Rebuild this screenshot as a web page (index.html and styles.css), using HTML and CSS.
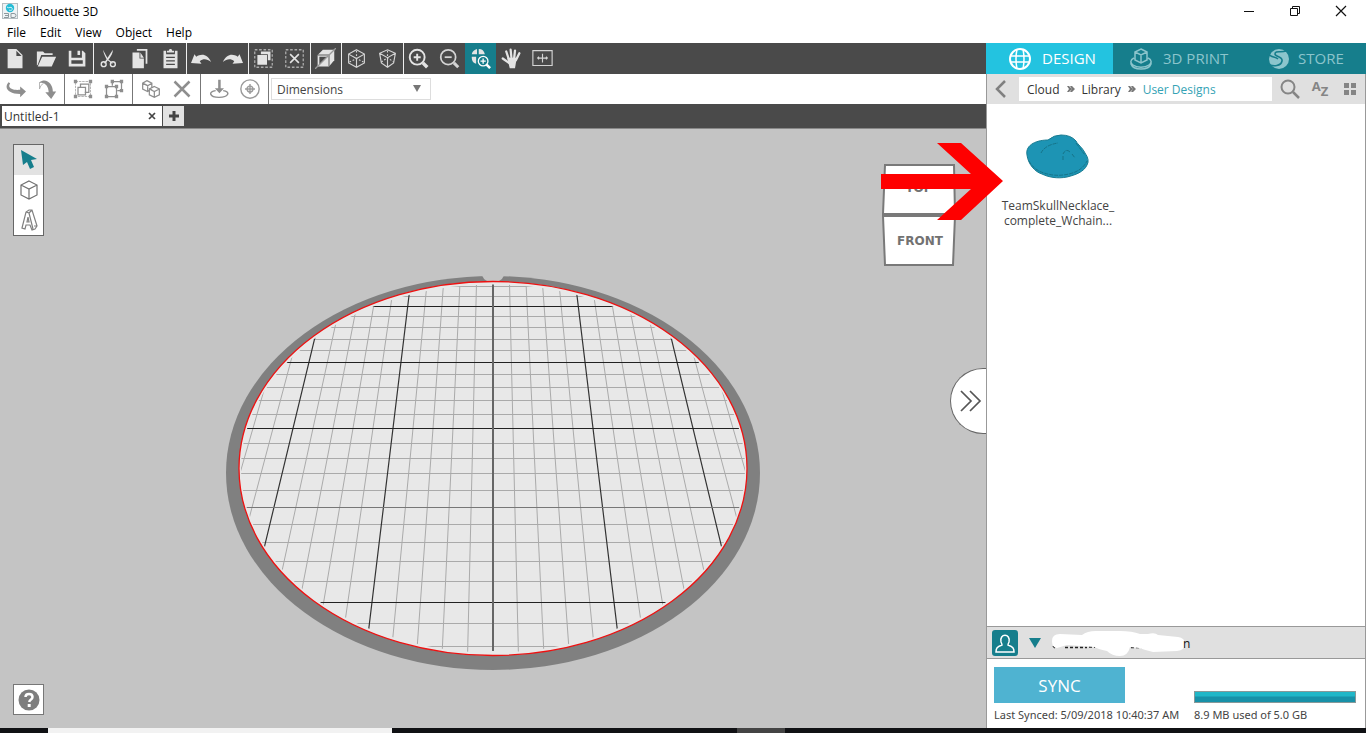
FILE: index.html
```html
<!DOCTYPE html>
<html lang="en">
<head>
<meta charset="utf-8">
<title>Silhouette 3D</title>
<link rel="stylesheet" href="styles.css">
</head>
<body>
<div class="window">
  <header class="titlebar">
    <svg class="app-icon" width="16" height="16" viewBox="0 0 16 16"><rect x=".5" y=".5" width="15" height="15" fill="#eef3f5" stroke="#b5bec2"/><circle cx="8" cy="5" r="4.200" fill="#25bcd6"/><path d="M5 4c2 2 4-1 5 1s-1 3-3 2" fill="none" stroke="#d5f3f8"/><path d="M2 10.500h4.500v4H2M3 12.500h3M9 10.500h3q2 0 2 2t-2 2H9z" fill="none" stroke="#8e999e"/></svg>
    <h1 class="app-name">Silhouette 3D</h1>
    <div class="window-controls">
      <button class="win-btn" aria-label="Minimize"><svg width="12" height="12"><path d="M1 6.500h10" stroke="#111"/></svg></button>
      <button class="win-btn" aria-label="Restore"><svg width="12" height="12" fill="none" stroke="#111"><path d="M1.500 3.500h7v7h-7zM3.500 3V1.500h7v7H9"/></svg></button>
      <button class="win-btn" aria-label="Close"><svg width="12" height="12"><path d="M1 1l10 10M11 1L1 11" stroke="#111" stroke-width="1.200"/></svg></button>
    </div>
  </header>
  <nav class="menubar">
    <button class="menu">File</button><button class="menu">Edit</button><button class="menu">View</button><button class="menu">Object</button><button class="menu">Help</button>
  </nav>

  <div class="main">
    <section class="editor">
      <div class="toolbar">
        <div class="group">
          <button class="tool" aria-label="New"><svg viewBox="0 0 24 24"><path fill-rule="evenodd" d="M3 1h10l7 7v15H3zM13 3v6h6z"/></svg></button>
          <button class="tool" aria-label="Open"><svg viewBox="0 0 24 24"><path d="M1 20V4h7l2 2h9v2H6L2 19M7 10h16l-5 11H2z"/></svg></button>
          <button class="tool" aria-label="Save"><svg viewBox="0 0 24 24"><path fill-rule="evenodd" d="M2 3h3v8h12V3h1l3 3v15H2zM5 14v4h13v-4zM12 3h3v5h-3z"/></svg></button>
        </div>
        <div class="group">
          <button class="tool" aria-label="Cut"><svg viewBox="0 0 24 24"><path d="M6 2c1 3 4 8 6 11l5 4-1 1-6-5C8 9 6 6 6 2zM17 2c0 4-2 7-4 10l-5 6-1-1 4-6z"/><g fill="none" stroke="#e4e4e4" stroke-width="1.600"><circle cx="6.500" cy="18.500" r="2.800"/><circle cx="17" cy="18.500" r="2.800"/></g></svg></button>
          <button class="tool" aria-label="Copy"><svg viewBox="0 0 24 24"><path d="M9 1h12v17h-2V3H9zM4 5h8v7h5v11H4zM13 5l4 6h-4z"/></svg></button>
          <button class="tool" aria-label="Paste"><svg viewBox="0 0 24 24"><path fill-rule="evenodd" d="M4 3h3v4h10V3h3v20H4zM7 10v1.500h10V10zm0 4v1.500h10V14zm0 4v1.500h10V18zM8 5V3h2l1-2h2l1 2h2v2z"/></svg></button>
        </div>
        <div class="group">
          <button class="tool" aria-label="Undo"><svg viewBox="0 0 24 24"><path d="M0 17L4 7l2 3c6-4 13-3 17 6-5-4-9-4-13-1l2 3z"/></svg></button>
          <button class="tool" aria-label="Redo"><svg viewBox="0 0 24 24"><path d="M24 17L20 7l-2 3C12 6 5 7 1 16c5-4 9-4 13-1l-2 3z"/></svg></button>
        </div>
        <div class="group">
          <button class="tool" aria-label="Select all"><svg viewBox="0 0 24 24"><path d="M2 2h20v20H2z" fill="none" stroke="#aaa" stroke-width="1.500" stroke-dasharray="3 2"/><path d="M9 4h11v10h-3V7H9zM5 8h11v11H5z"/></svg></button>
          <button class="tool" aria-label="Deselect all"><svg viewBox="0 0 24 24" fill="none" stroke="#aaa"><path d="M2 2h20v20H2z" stroke-width="1.500" stroke-dasharray="3 2"/><path d="M7 7l10 10M17 7L7 17" stroke="#e4e4e4" stroke-width="1.800"/></svg></button>
        </div>
        <div class="group">
          <button class="tool" aria-label="Mirror"><svg viewBox="0 0 24 24"><path d="M3 8l6-6h13v12l-6 7H3z"/><path d="M3 8h13l6-6M16 8v13" fill="none" stroke="#4a4a4a"/><path d="M5 10h9L5 19z" fill="#4a4a4a"/><path d="M0 24L24 0" stroke="#999" stroke-width="1.500"/></svg></button>
        </div>
        <div class="group">
          <button class="tool" aria-label="Perspective view"><svg viewBox="0 0 24 24" fill="none" stroke="#d4d4d4" stroke-width="1.300"><path d="M12 2l9 5v10l-9 5-9-5V7zM3 7l9 5 9-5M12 12v10"/><path d="M12 3v9M4 16l8-4 8 4" stroke-dasharray="2 2"/></svg></button>
          <button class="tool" aria-label="Orthographic view"><svg viewBox="0 0 24 24" fill="none" stroke="#d4d4d4" stroke-width="1.300"><path d="M12 2l9 4-2 11-7 5-7-5L3 6zM3 6l9 5 9-5M12 11v11"/><path d="M12 3v8M5 16l7-5 7 5" stroke-dasharray="2 2"/></svg></button>
        </div>
        <div class="group">
          <button class="tool" aria-label="Zoom in"><svg viewBox="0 0 24 24" fill="none" stroke="#e4e4e4" stroke-width="2.200"><circle cx="10.500" cy="10.500" r="8.500"/><path d="M6.500 10.500h8M10.500 6.500v8"/><path d="M17 17l5 5" stroke-width="4"/></svg></button>
          <button class="tool" aria-label="Zoom out"><svg viewBox="0 0 24 24" fill="none" stroke="#d4d4d4" stroke-width="2"><circle cx="10.500" cy="10.500" r="8.500"/><path d="M6.500 10.500h8"/><path d="M17 17l5 5" stroke-width="3.500"/></svg></button>
          <button class="tool active" aria-label="Fit to plate"><svg viewBox="0 0 24 24"><path d="M2 7c1-4 3-5 6-6v6zM10 1c4 0 6 2 7 6h-7zM2 10h5v8c-4-1-5-4-5-8z"/><g fill="none" stroke="#fff" stroke-width="1.500"><circle cx="15" cy="15" r="5.500"/><path d="M12 15h6M15 12v6"/><path d="M19 19l4 4" stroke-width="3"/></g></svg></button>
          <button class="tool" aria-label="Pan"><svg viewBox="0 0 24 24" fill="none" stroke="#e4e4e4" stroke-width="2.600" stroke-linecap="round"><path d="M9 13L6 4M12 12L11 2M15 12l1-9M17 14l4-8M9 17l-7-5"/><path d="M7 11h11l-2 12H10z" fill="#e4e4e4" stroke="none"/></svg></button>
          <button class="tool" aria-label="Fit window"><svg viewBox="0 0 24 24" fill="none" stroke="#d4d4d4" stroke-width="1.300"><path d="M1 3h22v17H1zM7 11.500h10M12 6.500v10M8 10l-1.500 1.500L8 13M16 10l1.500 1.500L16 13"/></svg></button>
        </div>
      </div>

      <div class="toolbar light">
        <div class="group">
          <button class="tool" aria-label="Rotate horizontally"><svg viewBox="0 0 24 24"><path d="M3 4c-6 7 0 14 14 14v4l7-7-7-6v4C8 14 1 11 5 5z"/></svg></button>
          <button class="tool" aria-label="Rotate vertically"><svg viewBox="0 0 24 24"><path d="M3 4c8-6 16 2 16 11h4l-6 9-7-8h4C14 9 9 3 3 5z"/><path d="M3 4v8q1-5 5-7" fill="none" stroke="#aaa"/></svg></button>
        </div>
        <div class="group">
          <button class="tool" aria-label="Group"><svg viewBox="0 0 24 24"><path d="M3 3h18v18H3z" fill="none" stroke="#a8a8a8" stroke-dasharray="3 1"/><path d="M9 10V6h10v10h-5M6 10h9v9H6z" fill="none" stroke="#8e8e8e" stroke-width="1.500"/><path d="M1 1h4v4H1zM19 1h4v4h-4zM1 19h4v4H1zM19 19h4v4h-4z"/></svg></button>
          <button class="tool" aria-label="Ungroup"><svg viewBox="0 0 24 24"><path d="M10 8V3h11v11h-5M3 9h12v12H3z" fill="none" stroke="#8e8e8e" stroke-width="1.500"/><path d="M8 1h4v4H8zM19 1h4v4h-4zM19 12h4v4h-4zM1 7h4v4H1zM13 7h4v4h-4zM1 19h4v4H1zM13 19h4v4h-4z"/></svg></button>
        </div>
        <div class="group">
          <button class="tool" aria-label="Duplicate"><svg viewBox="0 0 24 24" fill="none" stroke="#8e8e8e" stroke-width="1.500"><path d="M7 2l6 3v7l-5 3-6-3V5zM2 5l6 3 5-3M8 8v7"/><path d="M16 9l6 3v7l-6 3-6-3v-7zM10 12l6 3 6-3M16 15v7" fill="#fff"/></svg></button>
          <button class="tool" aria-label="Delete"><svg viewBox="0 0 24 24" fill="none" stroke="#8e8e8e" stroke-width="3"><path d="M3 3l18 18M21 3L3 21"/></svg></button>
        </div>
        <div class="group">
          <button class="tool" aria-label="Drop to plate"><svg viewBox="0 0 24 24"><path d="M11 1h3v10h4l-5.500 6L7 11h4z"/><path d="M8 14c-9 1-8 8 4 8s14-7 5-8" fill="none" stroke="#8e8e8e" stroke-width="1.700"/></svg></button>
          <button class="tool" aria-label="Center"><svg viewBox="0 0 24 24" fill="none" stroke="#9a9a9a" stroke-width="1.700"><circle cx="12" cy="12" r="11"/><circle cx="12" cy="12" r="3.500"/><path d="M6 12h12M12 6v12"/></svg></button>
        </div>
        <div class="group pick">
          <div class="select-wrap"><select class="select" aria-label="Tool options"><option>Dimensions</option></select><svg class="arrow" width="8" height="8"><path d="M0 1h8L4 8z" fill="#777"/></svg></div>
        </div>
      </div>

      <div class="tabs">
        <div class="doc-tab"><span>Untitled-1</span><button class="tab-close" aria-label="Close tab"><svg width="8" height="8"><path d="M1 1l6 6M7 1L1 7" stroke="#444" stroke-width="1.700"/></svg></button></div>
        <button class="tab-add" aria-label="New tab"><svg width="12" height="12"><path d="M6 1v10M1 6h10" stroke="#444" stroke-width="3"/></svg></button>
      </div>

      <div class="canvas">
        <svg class="plate" viewBox="226 276 534 394" role="img" aria-label="Build plate">
          <defs><clipPath id="inside"><ellipse cx="493" cy="468.500" rx="252" ry="184"/></clipPath></defs>
          <ellipse cx="493" cy="473" rx="267" ry="197" fill="#808080"/>
          <path d="M482 275h22q-2 7-11 7t-11-7z" fill="#c4c4c4"/>
          <ellipse cx="493" cy="468.500" rx="254" ry="187" fill="#e8e8e8" stroke="#ee1111" stroke-width="1.300"/>
          <g clip-path="url(#inside)" fill="none">
            <path stroke="#aaa" d="M230 286.500h526M230 296.500h526M230 316.500h526M230 327.500h526M230 339.500h526M230 350.500h526M230 374.500h526M230 387.500h526M230 400.500h526M230 414.500h526M230 443.500h526M230 458.500h526M230 473.500h526M230 490.500h526M230 524.500h526M230 542.500h526M230 561.500h526M230 581.500h526M230 623.500h526M230 646.500h526"/>
            <path stroke="#aaa" d="M476.800 270L467.200 670M460.600 270L441.300 670M444.500 270L415.500 670M428.300 270L389.700 670M395.900 270L338 670M379.700 270L312.200 670M363.600 270L286.400 670M347.400 270L260.500 670M315 270L208.900 670M298.800 270L183 670M509.200 270L518.800 670M525.400 270L544.700 670M541.500 270L570.500 670M557.700 270L596.300 670M590.100 270L648 670M606.300 270L673.800 670M622.400 270L699.600 670M638.600 270L725.500 670M671 270L777.100 670M687.200 270L803 670"/>
            <path stroke="#333" stroke-width="1.200" d="M412.100 270L363.800 670M331.200 270L234.700 670M573.900 270L622.200 670M654.800 270L751.300 670"/>
            <path stroke="#222" d="M230 306.500h526M230 362.500h526M230 428.500h526M230 602.500h526"/>
            <path stroke="#777" d="M230 507.500h526"/>
            <path stroke="#666" stroke-width="2" d="M493 284v367"/>
          </g>
        </svg>

        <div class="palette">
          <button class="palette-btn on" aria-label="Select"><svg width="18" height="22"><path d="M1 1l16 9-6 1 3 7-4 2-3-7-4 3z" fill="#167e8c"/></svg></button>
          <button class="palette-btn" aria-label="Shapes"><svg width="20" height="20" fill="none" stroke="#707070" stroke-width="1.200"><path d="M10 1l8 4v10l-8 4-8-4V5zM2 5l8 4 8-4M10 9v10"/></svg></button>
          <button class="palette-btn" aria-label="Text"><svg width="18" height="24" fill="none" stroke="#808080" stroke-width="1.200"><path d="M2 20L6 4l3-2h3l5 16-2 3-3 1-2-5H6l-1 4zM6 4l3 1 4 16M8 9l-1 5h2zM9 5l3-3M14 18l3 0"/></svg></button>
        </div>

        <svg class="view-cube" width="74" height="102" viewBox="0 0 74 102" role="img" aria-label="View cube">
          <g fill="#fff" stroke="#797979" stroke-width="2"><path d="M3 1h69l1 49H1zM1 52h72l-2 49H3z"/></g>
          <path d="M1 51h72" stroke="#797979" stroke-width="4"/>
          <text class="cube-text" x="37" y="28">TOP</text>
          <text class="cube-text" x="38" y="81">FRONT</text>
        </svg>

        <button class="collapse" aria-label="Collapse panel"><svg width="22" height="22" fill="none" stroke="#555" stroke-width="1.700"><path d="M1 1l10 10L1 21M10 1l10 10-10 10"/></svg></button>
        <button class="help" aria-label="Help"><svg width="22" height="22" viewBox="0 0 22 22"><circle cx="11" cy="11" r="10.500" fill="#7e7e7e"/><path d="M7.500 8q0-3 3.500-3t3.500 3q0 1.500-1.500 2.500T11.200 13" fill="none" stroke="#fff" stroke-width="2.500"/><path d="M9.700 15h3v3h-3z" fill="#fff"/></svg></button>
      </div>
    </section>

    <aside class="panel">
      <div class="modes">
        <button class="mode current"><svg class="mode-icon" viewBox="0 0 22 22" fill="none" stroke="#fff" stroke-width="1.500"><circle cx="11" cy="11" r="10" stroke-width="2"/><path d="M1 8h20M1 14h20M8 1q-2 10 0 20M14 1q2 10 0 20"/></svg>DESIGN</button>
        <button class="mode print"><svg class="mode-icon" viewBox="0 0 22 22" fill="none" stroke="#8cc5cc" stroke-width="1.500"><path d="M11 1l6 3v8l-6 3-6-3V4zM5 4l6 3 6-3M11 7v8M4 10c-4 2-4 5-1 7 4 3 12 3 16 0 3-2 3-5-1-7M1 14v2c1 3 5 5 10 5s9-2 10-5v-2"/></svg>3D PRINT</button>
        <button class="mode store"><svg class="mode-icon" viewBox="0 0 22 22"><circle cx="12" cy="11" r="10" fill="#8cc5cc"/><path d="M19 3c-5 2-11-1-11 3 0 3 8 2 7 7s-8 6-15 3" fill="none" stroke="#167e8c" stroke-width="1.600"/><path d="M0 5c4 5 8 3 11 6" fill="none" stroke="#167e8c" stroke-width="1.600"/></svg>STORE</button>
      </div>

      <div class="location">
        <button class="icon-btn back" aria-label="Back"><svg width="12" height="18"><path d="M10 1L2 9l8 8" fill="none" stroke="#808080" stroke-width="2.500"/></svg></button>
        <nav class="crumbs">
          <a class="crumb" href="#">Cloud</a><svg class="sep" viewBox="0 0 8 8"><path d="M0 1h2l3 3-3 3H0l2-3zM3 1h2l3 3-3 3H3l2-3z"/></svg><a class="crumb" href="#">Library</a><svg class="sep" viewBox="0 0 8 8"><path d="M0 1h2l3 3-3 3H0l2-3zM3 1h2l3 3-3 3H3l2-3z"/></svg><a class="crumb here" href="#">User Designs</a>
        </nav>
        <button class="icon-btn" aria-label="Search"><svg width="20" height="20" fill="none" stroke="#858585" stroke-width="2"><circle cx="8" cy="8" r="6.500"/><path d="M13 13l6 6" stroke-width="2.500"/></svg></button>
        <button class="icon-btn sort" aria-label="Sort A to Z"><span>A</span><span class="z">Z</span></button>
        <button class="icon-btn" aria-label="Grid view"><svg width="14" height="14" fill="#858585"><path d="M1 1h5v5H1zM8 1h5v5H8zM1 8h5v5H1zM8 8h5v5H8z"/></svg></button>
      </div>

      <div class="library">
        <figure class="design">
          <svg width="64" height="48" viewBox="0 0 64 48"><path d="M1 21C-1 10 12 6 22 6q6-5 13-5 10 0 15 6c2 4 6 6 9 12q5 7 2 12c-3 7-12 10-20 12-10 2-19 0-25-3C9 38 2 30 1 21z" fill="#1d94b4" stroke="#197b91"/><path d="M3 27q5 9 15 12 12 4 25 1t18-13M15 19q4-8 17-10M37 20q3-6 7-2M37 26v-4M46 20l3 4M50 9q5 7 9 12" fill="none" stroke="#167489" stroke-dasharray="4 1"/></svg>
          <figcaption class="caption">TeamSkullNecklace_<br>complete_Wchain...</figcaption>
        </figure>
      </div>

      <div class="account">
        <button class="user" aria-label="Account"><svg width="26" height="26"><rect width="26" height="26" rx="3" fill="#167e8c"/><path d="M9 12c-2-9 10-9 8 0-1 2-1 3-1 3 5 2 6 3 6 7H4c0-4 1-5 6-7 0 0 0-1-1-3z" fill="none" stroke="#fff" stroke-width="1.500"/></svg></button>
        <button class="user-menu" aria-label="Account menu"><svg width="12" height="12"><path d="M0 1h12L6 11z" fill="#167e8c"/></svg></button>
        <svg class="redacted" width="140" height="26" viewBox="0 0 140 26"><path d="M2 16l2 2M14 17.500h22M38 17h6M80 17.500h14" stroke="#222" stroke-width="1.500" stroke-dasharray="3 2" fill="none"/><path d="M1 11Q1 4 9 4l22 1Q36 1 45 1h24q12 0 20 3h8q7-2 10 1l20 2q7 1 7 7t-8 7l-24 1q-8-2-14-4l-9-1q-2 9-10 9t-13-5q-10-2-12-4l-28-2-10 3Q1 18 1 11z" fill="#fff"/><text class="tail" x="132" y="18">n</text></svg>
      </div>

      <div class="sync">
        <div class="sync-col">
          <button class="sync-btn">SYNC</button>
          <span class="status">Last Synced: 5/09/2018 10:40:37 AM</span>
        </div>
        <div class="usage-col">
          <div class="usage" role="img" aria-label="Storage used"></div>
          <span class="status">8.9 MB used of 5.0 GB</span>
        </div>
      </div>
    </aside>
  </div>

  <div class="taskbar"><span class="search-strip"></span><span class="task-item"></span></div>
  <svg class="pointer" width="122" height="78" viewBox="0 0 122 78" aria-hidden="true"><path d="M0 31h90L56 0h24l42 38-42 39H56l34-31H0z" fill="#fe0000"/></svg>
</div>
</body>
</html>
```

FILE: styles.css
```css
* { box-sizing: border-box; }
body { margin: 0; font: 12px/15px "Open Sans", "Noto Sans", sans-serif; color: #333; }
button { margin: 0; padding: 0; border: 0; background: none; font: inherit; color: inherit; }
button, .group, .tool { display: flex; align-items: center; justify-content: center; }
svg { display: block; flex: none; }

.window { position: relative; display: flex; flex-direction: column; min-height: 100vh; background: #fff; }
.titlebar { display: flex; align-items: center; height: 22px; padding-left: 2px; }
.app-name { margin: 0 0 0 5px; font-size: 12px; font-weight: 400; color: #000; }
.window-controls { display: flex; margin-left: auto; margin-right: 2px; }
.win-btn { width: 46px; height: 20px; }
.menubar { display: flex; gap: 14px; height: 21px; padding-left: 7px; color: #000; }

.main { display: flex; flex: 1; }
.editor { display: flex; flex: 1; flex-direction: column; min-width: 0; }

.toolbar { display: flex; height: 31px; background: #4a4a4a; }
.toolbar .group + .group { box-shadow: inset 1px 0 #eee; }
.tool { width: 31px; height: 31px; }
.tool svg { width: 21px; height: 21px; fill: #e4e4e4; }
.tool svg[fill="none"] { fill: none; }
.tool.active { background: #167e8c; }
.toolbar.light { height: 30px; background: #fff; }
.light .group { padding-right: 2px; }
.light .group + .group { padding: 0 3px; box-shadow: inset 1px 0 #777; }
.light .tool { height: 30px; }
.light .tool svg { width: 20px; height: 20px; fill: #8e8e8e; }
.light .tool svg[fill="none"] { fill: none; }
.select-wrap { position: relative; }
.select { width: 160px; height: 22px; padding: 0 5px; border: 1px solid #ddd; border-radius: 0; background: #fff; color: #444; font: inherit; appearance: none; }
.arrow { position: absolute; right: 10px; top: 6px; pointer-events: none; }

.tabs { display: flex; align-items: center; height: 25px; padding-left: 2px; background: #4a4a4a; border-bottom: 1px solid #888; }
.doc-tab { display: flex; align-items: center; justify-content: space-between; width: 160px; height: 20px; padding: 0 6px 0 2px; background: #fff; }
.tab-add { width: 21px; height: 20px; margin-left: 1px; background: #e2e2e2; }

.canvas { position: relative; display: flex; flex: 1; align-items: flex-start; justify-content: center; padding: 147px 0 58px; background: #c4c4c4; }
.plate { width: 534px; max-width: 100%; }
.palette { position: absolute; left: 13px; top: 15px; border: 1px solid #666; background: #fff; }
.palette-btn { width: 29px; height: 30px; }
.palette-btn.on { background: #e2e2e2; }
.view-cube { position: absolute; right: 30px; top: 35px; }
.cube-text { font: bold 12px "DejaVu Sans", sans-serif; fill: #727272; text-anchor: middle; }
.collapse { position: absolute; right: 0; top: 239px; width: 36px; height: 66px; padding-left: 4px; border: 1px solid #666; border-right: 0; border-radius: 33px 0 0 33px; background: #fff; }
.help { position: absolute; left: 13px; bottom: 13px; width: 31px; height: 31px; border: 1px solid #777; background: #fff; }

.panel { display: flex; flex: 0 0 380px; flex-direction: column; min-width: 0; border: solid #999; border-width: 0 1px; background: #fff; }
.modes { display: flex; height: 31px; margin: 0 -1px; background: #167e8c; font-size: 15px; }
.mode { justify-content: flex-start; gap: 11px; color: #8cc5cc; }
.mode-icon { width: 22px; height: 22px; }
.mode.current { width: 127px; padding-left: 23px; background: #23c3e0; color: #fff; }
.mode.print { width: 137px; padding-left: 17px; }
.mode.store { flex: 1; padding-left: 17px; gap: 9px; }
.location { display: flex; align-items: center; height: 30px; background: #e0e0e0; }
.icon-btn { width: 30px; height: 30px; }
.back { width: 32px; padding-right: 4px; }
.crumbs { display: flex; flex: 1; align-items: center; gap: 7px; height: 24px; margin-right: 3px; padding-left: 8px; background: #fff; }
.crumb { color: #333; text-decoration: none; }
.crumb.here { color: #35a3b5; }
.sep { width: 8px; height: 8px; fill: #777; }
.sort { align-items: flex-start; padding-top: 5px; font-weight: 700; font-size: 13px; color: #858585; }
.z { padding-top: 5px; }
.library { flex: 1; padding: 30px 13px; }
.design { display: flex; flex-direction: column; align-items: center; gap: 16px; width: 116px; margin: 0; text-align: center; }
.caption { color: #444; }

.account { display: flex; align-items: center; height: 33px; padding-left: 5px; border: solid #999; border-width: 1px 0; background: #e0e0e0; }
.user-menu { margin: 0 10px 0 11px; }
.tail { font: 12px "Open Sans", sans-serif; fill: #111; }
.sync { display: flex; align-items: flex-end; justify-content: space-between; height: 69px; padding: 0 9px 6px 7px; color: #444; }
.sync-btn { width: 131px; height: 36px; margin: 0 0 4px; background: #4fb3d1; color: #fff; font-size: 17px; }
.status { display: block; font: 11px/15px "Noto Sans", sans-serif; white-space: nowrap; }
.usage-col { width: 162px; }
.usage { height: 12px; margin-bottom: 4px; border: 1px solid #899; background: linear-gradient(#20b7c8 40%, #1891a8 50%); }

.taskbar { display: flex; height: 5px; padding-left: 48px; background: #101114; }
.search-strip { width: 344px; background: #f2f2f2; }
.task-item { width: 48px; margin-left: 345px; background: #444; }
.pointer { position: absolute; right: 363px; top: 143px; }
```
